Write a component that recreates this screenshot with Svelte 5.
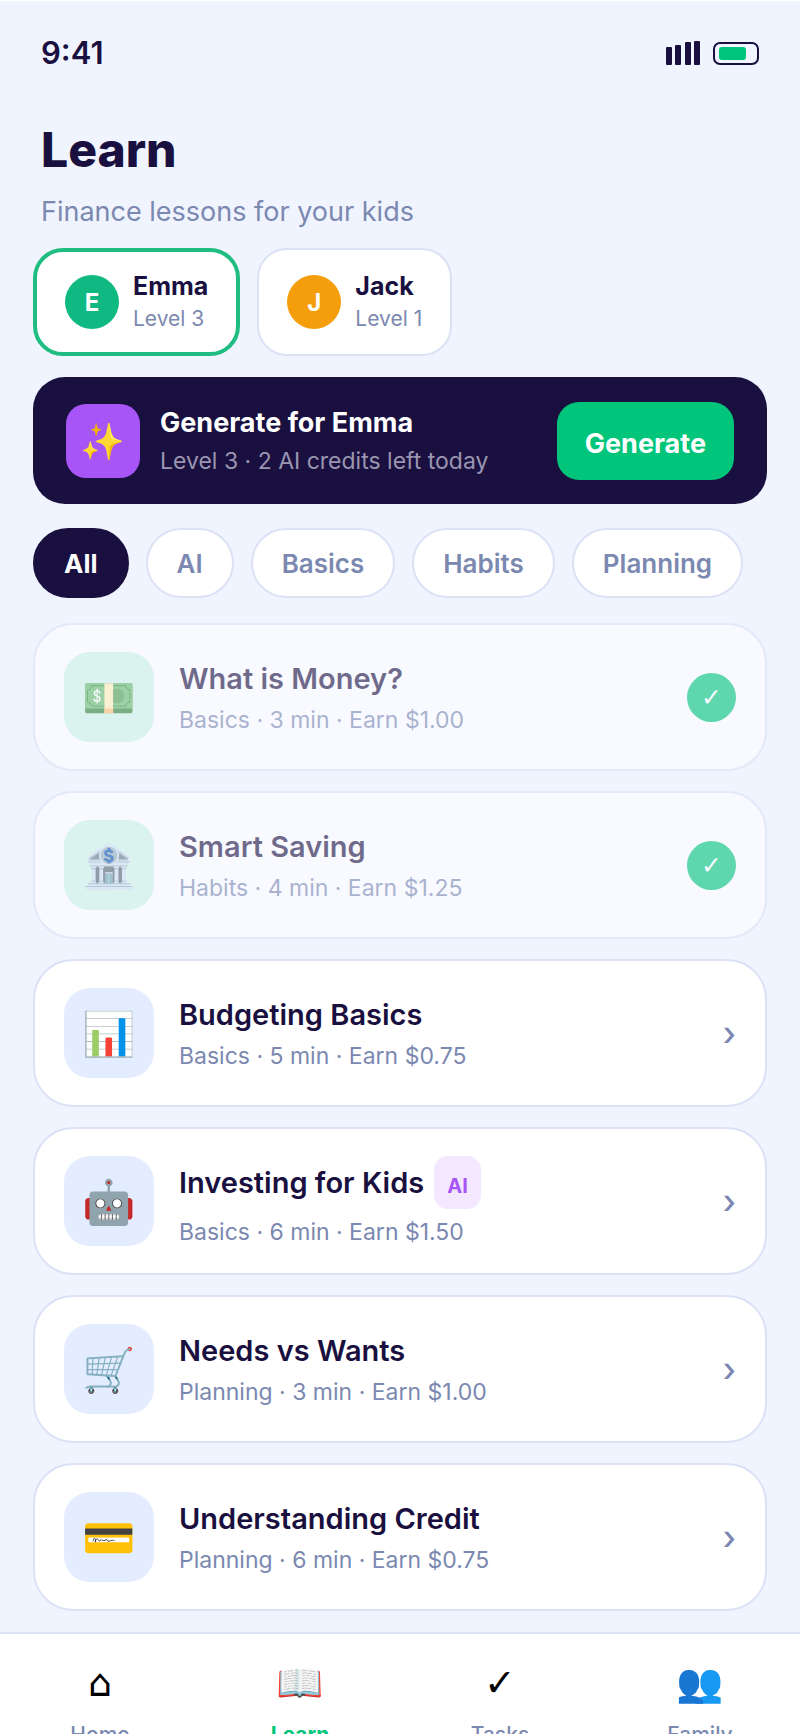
<script lang="ts">
  type Kid = { name: string; level: number; color: string };
  type Lesson = {
    icon: string;
    title: string;
    category: string;
    minutes: number;
    reward: string;
    done?: boolean;
    ai?: boolean;
  };

  const kids: Kid[] = [
    { name: "Emma", level: 3, color: "#10b981" },
    { name: "Jack", level: 1, color: "#f59e0b" },
  ];

  const filters = ["All", "AI", "Basics", "Habits", "Planning"];

  const lessons: Lesson[] = [
    { icon: "💵", title: "What is Money?", category: "Basics", minutes: 3, reward: "$1.00", done: true },
    { icon: "🏦", title: "Smart Saving", category: "Habits", minutes: 4, reward: "$1.25", done: true },
    { icon: "📊", title: "Budgeting Basics", category: "Basics", minutes: 5, reward: "$0.75" },
    { icon: "🤖", title: "Investing for Kids", category: "Basics", minutes: 6, reward: "$1.50", ai: true },
    { icon: "🛒", title: "Needs vs Wants", category: "Planning", minutes: 3, reward: "$1.00" },
    { icon: "💳", title: "Understanding Credit", category: "Planning", minutes: 6, reward: "$0.75" },
  ];

  const tabs = [
    { icon: "⌂", label: "Home" },
    { icon: "📖", label: "Learn" },
    { icon: "✓", label: "Tasks" },
    { icon: "👥", label: "Family" },
  ];

  let kid = $state.raw(kids[0]);
  let filter = $state("All");
  let tab = $state("Learn");

  let shown = $derived(
    lessons.filter((l) => filter === "All" || l.category === filter || (filter === "AI" && l.ai)),
  );
</script>

<div class="app">
  <div class="status">
    <span class="time">9:41</span>
    <svg class="signal" viewBox="0 0 35 26" aria-hidden="true">
      <rect x="0" y="7" width="6" height="18" rx="1" />
      <rect x="9" y="5" width="6" height="20" rx="1" />
      <rect x="19" y="2" width="6" height="23" rx="1" />
      <rect x="28" y="1" width="6" height="24" rx="1" />
    </svg>
    <span class="battery"><span class="charge"></span></span>
  </div>

  <header>
    <h1>Learn</h1>
    <p>Finance lessons for your kids</p>
  </header>

  <main>
    <div class="kids">
      {#each kids as k}
        <button class="kid" class:active={kid === k} onclick={() => (kid = k)}>
          <span class="avatar" style="background: {k.color}">{k.name[0]}</span>
          <span class="who">
            <span class="name">{k.name}</span>
            <span class="level">Level {k.level}</span>
          </span>
        </button>
      {/each}
    </div>

    <section class="generate">
      <span class="spark">✨</span>
      <div class="pitch">
        <h2>Generate for {kid.name}</h2>
        <p>Level {kid.level} · 2 AI credits left today</p>
      </div>
      <button>Generate</button>
    </section>

    <div class="filters">
      {#each filters as f}
        <button class:active={filter === f} onclick={() => (filter = f)}>{f}</button>
      {/each}
    </div>

    <div class="lessons">
      {#each shown as l}
        <button class="lesson" class:done={l.done}>
          <span class="icon">{l.icon}</span>
          <span class="info">
            <span class="title">
              {l.title}
              {#if l.ai}<span class="badge">AI</span>{/if}
            </span>
            <span class="meta">{l.category} · {l.minutes} min · Earn {l.reward}</span>
          </span>
          {#if l.done}
            <span class="check">✓</span>
          {:else}
            <span class="chev">›</span>
          {/if}
        </button>
      {/each}
    </div>
  </main>

  <nav>
    {#each tabs as t}
      <button class:active={tab === t.label} onclick={() => (tab = t.label)}>
        <span class="glyph">{t.icon}</span>
        <span class="label">{t.label}</span>
      </button>
    {/each}
  </nav>
</div>

<style>
  :global(body) {
    background: #f0f4ff;
  }
  .app {
    display: flex;
    flex-direction: column;
    box-sizing: border-box;
    height: 100vh;
    overflow: hidden;
    border-top: 1px solid #fff;
    background: #f0f4ff;
    color: #1a1040;
    font-family: Inter, "Noto Color Emoji", sans-serif;
  }
  h1,
  h2,
  p {
    margin: 0;
  }
  button {
    margin: 0;
    border: none;
    color: inherit;
    font: inherit;
    text-align: left;
    cursor: pointer;
  }

  .status {
    display: flex;
    align-items: center;
    gap: 12px;
    flex: none;
    padding: 32px 41px 0;
    height: 40px;
  }
  .time {
    flex: 1;
    font-size: 31px;
    font-weight: 600;
    line-height: 38px;
  }
  .signal {
    width: 35px;
    height: 26px;
    fill: #1a1040;
  }
  .battery {
    box-sizing: border-box;
    width: 46px;
    height: 23px;
    padding: 3px 4px;
    border: 2px solid #1a1040;
    border-radius: 7px;
  }
  .charge {
    display: block;
    width: 27px;
    height: 13px;
    border-radius: 3px;
    background: #00c57a;
  }

  header {
    flex: none;
    padding: 47px 41px 20px;
  }
  h1 {
    font-size: 48px;
    font-weight: 800;
    line-height: 60px;
  }
  header p {
    margin-top: 16px;
    color: #7b88b0;
    font-size: 27px;
    line-height: 32px;
  }

  main {
    flex: none;
    padding: 0 33px 21px;
  }
  .kids {
    display: flex;
    gap: 17px;
  }
  .kid {
    display: flex;
    align-items: center;
    gap: 14px;
    box-sizing: border-box;
    height: 108px;
    padding: 0 28px;
    border: 2px solid #dbe2f5;
    border-radius: 30px;
    background: #fff;
  }
  .kid.active {
    border: 4px solid #1fbd82;
  }
  .avatar {
    display: grid;
    place-items: center;
    width: 54px;
    height: 54px;
    border-radius: 50%;
    color: #fff;
    font-size: 24px;
    font-weight: 700;
  }
  .who {
    display: flex;
    flex-direction: column;
    gap: 4px;
  }
  .name {
    font-size: 25px;
    font-weight: 700;
    line-height: 30px;
  }
  .level {
    color: #7b88b0;
    font-size: 21px;
    line-height: 28px;
  }

  .generate {
    display: flex;
    align-items: center;
    gap: 20px;
    margin-top: 21px;
    padding: 25px 33px 24px;
    border-radius: 32px;
    background: #1a1040;
  }
  .spark {
    display: grid;
    place-items: center;
    width: 74px;
    height: 74px;
    border-radius: 20px;
    background: #a855f7;
    font-size: 36px;
  }
  .pitch {
    flex: 1;
  }
  .generate h2 {
    color: #fff;
    font-size: 27px;
    font-weight: 700;
    line-height: 32px;
  }
  .generate p {
    margin-top: 8px;
    color: #9a95b0;
    font-size: 23px;
    line-height: 28px;
  }
  .generate button {
    height: 78px;
    padding: 4px 28px 0;
    border-radius: 22px;
    background: #00c57a;
    color: #fff;
    font-size: 27px;
    font-weight: 700;
  }

  .filters {
    display: flex;
    gap: 17px;
    margin: 24px 0 25px;
  }
  .filters button {
    height: 70px;
    padding: 0 29px;
    border: 2px solid #dbe2f5;
    border-radius: 40px;
    background: #fff;
    color: #7b88b0;
    font-size: 26px;
    font-weight: 600;
  }
  .filters .active {
    border-color: #1a1040;
    background: #1a1040;
    color: #fff;
    font-weight: 700;
  }

  .lessons {
    display: flex;
    flex-direction: column;
    gap: 20px;
  }
  .lesson {
    display: flex;
    align-items: center;
    gap: 25px;
    width: 100%;
    padding: 27px 29px;
    border: 2px solid #dbe2f5;
    border-radius: 40px;
    background: #fff;
  }
  .lesson.done {
    opacity: 0.6;
  }
  .icon {
    display: grid;
    place-items: center;
    width: 90px;
    height: 90px;
    border-radius: 26px;
    background: #e4ecff;
    font-size: 43px;
    line-height: 50px;
  }
  .done .icon {
    background: #ccf3e4;
  }
  .info {
    display: flex;
    flex-direction: column;
    flex: 1;
    gap: 9px;
  }
  .title {
    display: flex;
    align-items: center;
    gap: 10px;
    font-size: 29px;
    font-weight: 600;
    line-height: 36px;
  }
  .badge {
    padding: 14px 13px 7px;
    border-radius: 14px;
    background: #f3e8ff;
    color: #a855f7;
    font-size: 20px;
    font-weight: 700;
    line-height: 32px;
  }
  .meta {
    color: #7b88b0;
    font-size: 23px;
    line-height: 28px;
  }
  .check {
    display: grid;
    place-items: center;
    width: 49px;
    height: 49px;
    border-radius: 50%;
    background: #00c57a;
    color: #fff;
    font-family: "DejaVu Sans", sans-serif;
    font-size: 25px;
  }
  .chev {
    color: #7b88b0;
    font-size: 33px;
    font-weight: 500;
  }

  nav {
    display: grid;
    grid-template-columns: repeat(4, 1fr);
    flex: none;
    padding: 24px 0 40px;
    border-top: 2px solid #dbe2f5;
    background: #fff;
  }
  nav button {
    display: flex;
    flex-direction: column;
    align-items: center;
    gap: 14px;
    padding: 0;
    background: none;
  }
  .glyph {
    color: #000;
    font-family: "DejaVu Sans", "Noto Color Emoji", sans-serif;
    font-size: 38px;
    line-height: 50px;
  }
  .label {
    color: #7b88b0;
    font-size: 21px;
    font-weight: 500;
    line-height: 26px;
  }
  .active .label {
    color: #00c57a;
    font-weight: 700;
  }
</style>
